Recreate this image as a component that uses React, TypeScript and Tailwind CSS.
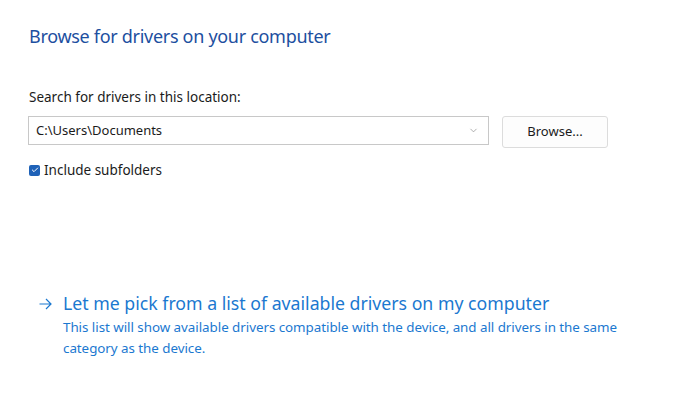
import { ChevronDown, Check } from "lucide-react";

export default function App() {
  return (
    <div
      className="min-h-screen w-full bg-white px-[29px] pt-[23px] text-[#1b1b1b]"
      style={{ fontFamily: '"Noto Sans", "Open Sans", sans-serif' }}
    >
      <h1 className="text-[18px] leading-[26px] tracking-[-0.3px] text-[#1d4f9f]">
        Browse for drivers on your computer
      </h1>

      <div className="mt-[39px] text-[13.5px] leading-[18px]">
        Search for drivers in this location:
      </div>

      <div className="mt-[7px] flex items-center">
        <div className="flex h-[29px] w-[461px] items-center justify-between border border-[#c8c8c8] bg-white pl-[7px] pr-[9px] -ml-px">
          <span className="text-[13px]">C:\Users\Documents</span>
          <ChevronDown className="h-[11px] w-[11px] text-[#8a8a8a]" strokeWidth={1.5} />
        </div>
        <button className="ml-[13px] mt-[3px] flex h-[32px] w-[106px] items-center justify-center rounded-[3px] border border-[#dcdcdc] bg-[#fdfdfd] text-[13px]">
          Browse...
        </button>
      </div>

      <label className="mt-[12px] flex items-center gap-[4px] text-[13.5px]">
        <span className="flex h-[11px] w-[11px] items-center justify-center rounded-[2px] bg-[#1f62b8]">
          <Check className="h-[8px] w-[8px] text-white" strokeWidth={3} />
        </span>
        Include subfolders
      </label>

      <div className="mt-[111px] flex items-start gap-[11px] pl-[10px] text-[#1b78d0]">
        <svg className="mt-[7px] h-[12px] w-[13px]" viewBox="0 0 13 12" fill="none" stroke="currentColor" strokeWidth="1.2">
          <path d="M0.5 6H12M7 1L12 6L7 11" />
        </svg>
        <div>
          <div className="text-[17.7px] leading-[24px]">
            Let me pick from a list of available drivers on my computer
          </div>
          <div className="mt-[2px] w-[580px] text-[13.4px] leading-[21px] tracking-[-0.05px]">
            This list will show available drivers compatible with the device, and all drivers in the same category as the device.
          </div>
        </div>
      </div>
    </div>
  );
}
